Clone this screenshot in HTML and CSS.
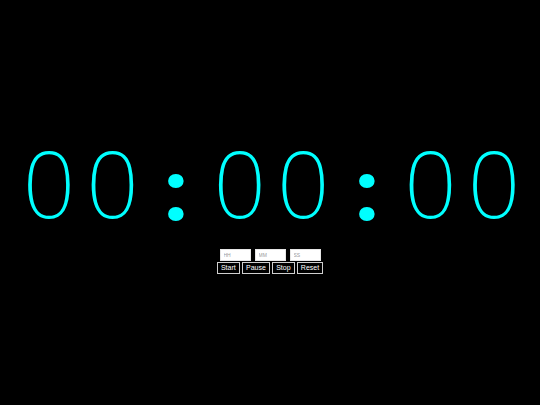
FILE: index.html
```html
<!DOCTYPE html>
<html>
<head>
<meta charset="utf-8">
<title>Timer</title>
<link rel="stylesheet" href="styles.css">
</head>
<body>
<main class="timer">
  <div class="display">
    <span class="digit">0</span><span class="digit">0</span><span class="colon">:</span><span class="digit">0</span><span class="digit">0</span><span class="colon">:</span><span class="digit">0</span><span class="digit">0</span>
  </div>
  <div class="inputs">
    <input class="field" type="text" placeholder="HH">
    <input class="field" type="text" placeholder="MM">
    <input class="field" type="text" placeholder="SS">
  </div>
  <div class="buttons">
    <button class="btn">Start</button>
    <button class="btn">Pause</button>
    <button class="btn">Stop</button>
    <button class="btn">Reset</button>
  </div>
</main>
</body>
</html>
```
FILE: styles.css
```css
html, body {
  margin: 0;
  padding: 0;
  background: #000;
}
body {
  height: 405px;
  overflow: hidden;
  font-family: "Liberation Sans", Arial, sans-serif;
}
.timer {
  display: flex;
  flex-direction: column;
  align-items: center;
  padding-top: 137px;
}
.display {
  display: flex;
  align-items: flex-start;
  height: 99px;
  color: #00ffff;
  line-height: 92px;
  padding-left: 3px;
}
.digit {
  width: 63.6px;
  text-align: center;
  font-family: "Noto Sans", sans-serif;
  font-weight: 200;
  font-size: 92px;
}
.colon {
  width: 63.6px;
  margin-top: 8.7px;
  text-align: center;
  font-family: Roboto, sans-serif;
  font-weight: 900;
  font-size: 85px;
}
.inputs {
  display: flex;
  gap: 4px;
  margin-top: 12.5px;
}
.field {
  box-sizing: border-box;
  width: 31px;
  height: 12px;
  margin: 0;
  padding: 0 3px;
  border: 1px solid #e6e6e6;
  background: #fff;
  font-family: "Liberation Sans", Arial, sans-serif;
  font-size: 5px;
  color: #333;
}
.field::placeholder {
  color: #9a9a9a;
}
.buttons {
  display: flex;
  gap: 2.3px;
  margin-top: 1.5px;
}
.btn {
  box-sizing: border-box;
  height: 12px;
  margin: 0;
  padding: 0 3px;
  border: 1px solid #cfcfcf;
  background: #000;
  color: #fff;
  font-family: "Liberation Sans", Arial, sans-serif;
  font-size: 7px;
  line-height: 10px;
}
```
